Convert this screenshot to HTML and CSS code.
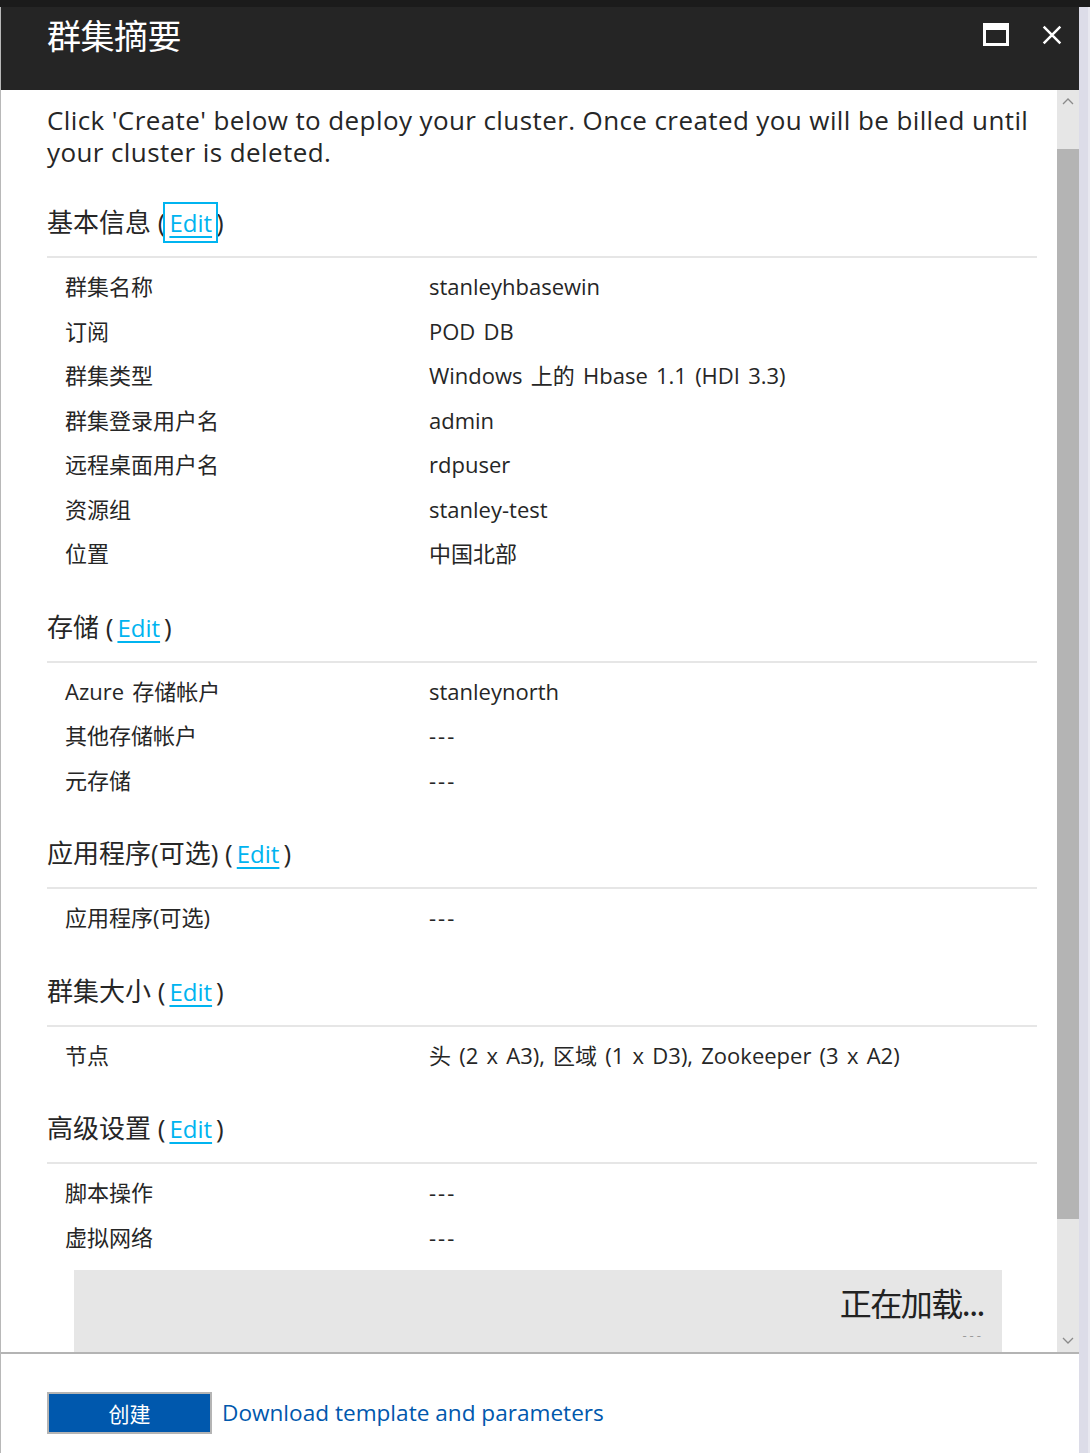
FILE: index.html
```html
<!DOCTYPE html>
<html lang="zh-CN">
<head>
    <meta charset="UTF-8">
    <meta name="viewport" content="width=device-width, initial-scale=1.0">
    <title>群集摘要</title>
    <link rel="stylesheet" href="styles.css">
</head>
<body>
    <div class="top-strip"></div>
    <div class="frame">
        <div class="blade">
            <header class="blade-header">
                <h1 class="blade-title">群集摘要</h1>
                <div class="blade-controls">
                    <span class="btn-maximize"></span>
                    <svg class="btn-close" width="24" height="24" viewBox="0 0 24 24">
                        <path d="M2 2 L22 22 M22 2 L2 22" stroke="#fff" stroke-width="3" fill="none"/>
                    </svg>
                </div>
            </header>

            <div class="blade-body">
                <div class="content">
                    <p class="intro">Click 'Create' below to deploy your cluster. Once created you will be billed until your cluster is deleted.</p>

                    <section class="group">
                        <h2 class="group-title">基本信息 (<a href="#" class="edit focused">Edit</a>)</h2>
                        <div class="props">
                            <div class="prop"><span class="prop-name">群集名称</span><span class="prop-value">stanleyhbasewin</span></div>
                            <div class="prop"><span class="prop-name">订阅</span><span class="prop-value">POD DB</span></div>
                            <div class="prop"><span class="prop-name">群集类型</span><span class="prop-value">Windows 上的 Hbase 1.1 (HDI 3.3)</span></div>
                            <div class="prop"><span class="prop-name">群集登录用户名</span><span class="prop-value">admin</span></div>
                            <div class="prop"><span class="prop-name">远程桌面用户名</span><span class="prop-value">rdpuser</span></div>
                            <div class="prop"><span class="prop-name">资源组</span><span class="prop-value">stanley-test</span></div>
                            <div class="prop"><span class="prop-name">位置</span><span class="prop-value">中国北部</span></div>
                        </div>
                    </section>

                    <section class="group">
                        <h2 class="group-title">存储 (<a href="#" class="edit">Edit</a>)</h2>
                        <div class="props">
                            <div class="prop"><span class="prop-name">Azure 存储帐户</span><span class="prop-value">stanleynorth</span></div>
                            <div class="prop"><span class="prop-name">其他存储帐户</span><span class="prop-value empty">---</span></div>
                            <div class="prop"><span class="prop-name">元存储</span><span class="prop-value empty">---</span></div>
                        </div>
                    </section>

                    <section class="group">
                        <h2 class="group-title">应用程序(可选) (<a href="#" class="edit">Edit</a>)</h2>
                        <div class="props">
                            <div class="prop"><span class="prop-name">应用程序(可选)</span><span class="prop-value empty">---</span></div>
                        </div>
                    </section>

                    <section class="group">
                        <h2 class="group-title">群集大小 (<a href="#" class="edit">Edit</a>)</h2>
                        <div class="props">
                            <div class="prop"><span class="prop-name">节点</span><span class="prop-value">头 (2 x A3), 区域 (1 x D3), Zookeeper (3 x A2)</span></div>
                        </div>
                    </section>

                    <section class="group">
                        <h2 class="group-title">高级设置 (<a href="#" class="edit">Edit</a>)</h2>
                        <div class="props">
                            <div class="prop"><span class="prop-name">脚本操作</span><span class="prop-value empty">---</span></div>
                            <div class="prop"><span class="prop-name">虚拟网络</span><span class="prop-value empty">---</span></div>
                        </div>
                    </section>

                    <div class="loading">
                        <span class="loading-text">正在加载...</span>
                        <span class="loading-sub">---</span>
                    </div>
                </div>

                <div class="scrollbar">
                    <svg class="arrow" width="12" height="8" viewBox="0 0 12 8"><path d="M1 7 L6 2 L11 7" stroke="#8a8a8a" stroke-width="1.3" fill="none"/></svg>
                    <div class="track"><div class="thumb"></div></div>
                    <svg class="arrow" width="12" height="8" viewBox="0 0 12 8"><path d="M1 1 L6 6 L11 1" stroke="#8a8a8a" stroke-width="1.3" fill="none"/></svg>
                </div>
            </div>

            <footer class="blade-footer">
                <button class="btn-create">创建</button>
                <a href="#" class="download-link">Download template and parameters</a>
            </footer>
        </div>
        <div class="edge"></div>
    </div>
</body>
</html>
```

FILE: styles.css
```css
body {
    margin: 0;
    font-family: 'Open Sans', 'Noto Sans CJK SC', sans-serif;
    background: #dcdce8;
    color: #262626;
    height: 1453px;
    overflow: hidden;
}

.top-strip {
    height: 7px;
    background: #1b1b1b;
}

.frame {
    display: flex;
    height: 1446px;
}

.blade {
    width: 1078px;
    display: flex;
    flex-direction: column;
    background: #fff;
    border-left: 1px solid #b8b8b8;
}

.edge {
    flex: 1;
    background: #dcdce8;
    border-right: 2px solid #e8e8f0;
}

/* header */
.blade-header {
    height: 83px;
    background: #252525;
    display: flex;
    align-items: flex-start;
    justify-content: space-between;
    padding: 0 16px 0 46px;
}

.blade-title {
    margin: 0;
    padding-top: 6px;
    font-family: 'Noto Sans CJK SC', sans-serif;
    font-size: 34px;
    font-weight: 400;
    line-height: 44px;
    color: #fff;
    letter-spacing: -0.5px;
}

.blade-controls {
    display: flex;
    align-items: center;
    gap: 32px;
    padding-top: 12px;
    height: 31px;
}

.btn-maximize {
    display: block;
    width: 20px;
    height: 13px;
    border: 3px solid #fff;
    border-top-width: 7px;
}

.btn-close {
    width: 22px;
    height: 20px;
}

/* body */
.blade-body {
    height: 1262px;
    display: flex;
    overflow: hidden;
}

.content {
    flex: 1;
    padding: 14px 20px 0 46px;
    overflow: hidden;
}

.intro {
    margin: 0 0 36px;
    font-size: 26px;
    line-height: 32px;
    letter-spacing: 0.4px;
}

.group {
    margin-bottom: 33px;
}

.group-title {
    margin: 0;
    font-size: 26px;
    font-weight: 400;
    line-height: 36px;
    padding-bottom: 15px;
    border-bottom: 2px solid #e6e6e6;
}

.edit {
    color: #00b4f0;
    font-size: 24px;
    text-decoration: underline;
    text-underline-offset: 4px;
    margin: 0 4px 0 4px;
}

.edit.focused {
    outline: 2px solid #00b4f0;
    outline-offset: 2px;
    margin: 0 2px 0 2px;
    padding: 0 2px;
}

.props {
    padding-top: 6px;
}

.prop {
    display: flex;
    font-size: 22px;
    line-height: 44.5px;
    padding-left: 18px;
    word-spacing: 2.5px;
}

.prop-name {
    width: 364px;
    flex-shrink: 0;
}

.prop-value.empty {
    letter-spacing: 2px;
}

.loading {
    margin: -22px 35px 0 27px;
    height: 110px;
    background: #e6e6e6;
    display: flex;
    flex-direction: column;
    align-items: flex-end;
    padding: 14px 18px 0 0;
    box-sizing: border-box;
}

.loading-text {
    font-family: 'Noto Sans CJK SC', sans-serif;
    font-size: 32px;
    line-height: 36px;
    letter-spacing: -1.5px;
    color: #222;
}

.loading-sub {
    margin-top: 9px;
    font-size: 13px;
    line-height: 12px;
    color: #9a9a9a;
    letter-spacing: 3px;
}

/* fake scrollbar */
.scrollbar {
    width: 22px;
    background: #e6e6e6;
    display: flex;
    flex-direction: column;
    align-items: center;
}

.arrow {
    margin: 7px 0;
}

.track {
    flex: 1;
    width: 100%;
}

.thumb {
    margin-top: 37px;
    height: 1070px;
    background: #b4b4b4;
}

/* footer */
.blade-footer {
    flex: 1;
    border-top: 2px solid #b4b4b4;
    display: flex;
    align-items: flex-start;
    gap: 10px;
    padding: 38px 0 0 46px;
}

.btn-create {
    width: 165px;
    height: 42px;
    border: 2px solid #b4b4b4;
    background: #0058ad;
    color: #fff;
    font-family: 'Noto Sans CJK SC', sans-serif;
    font-size: 21px;
    cursor: pointer;
}

.download-link {
    color: #0058ad;
    text-decoration: none;
    font-size: 22.6px;
    line-height: 42px;
}
```
